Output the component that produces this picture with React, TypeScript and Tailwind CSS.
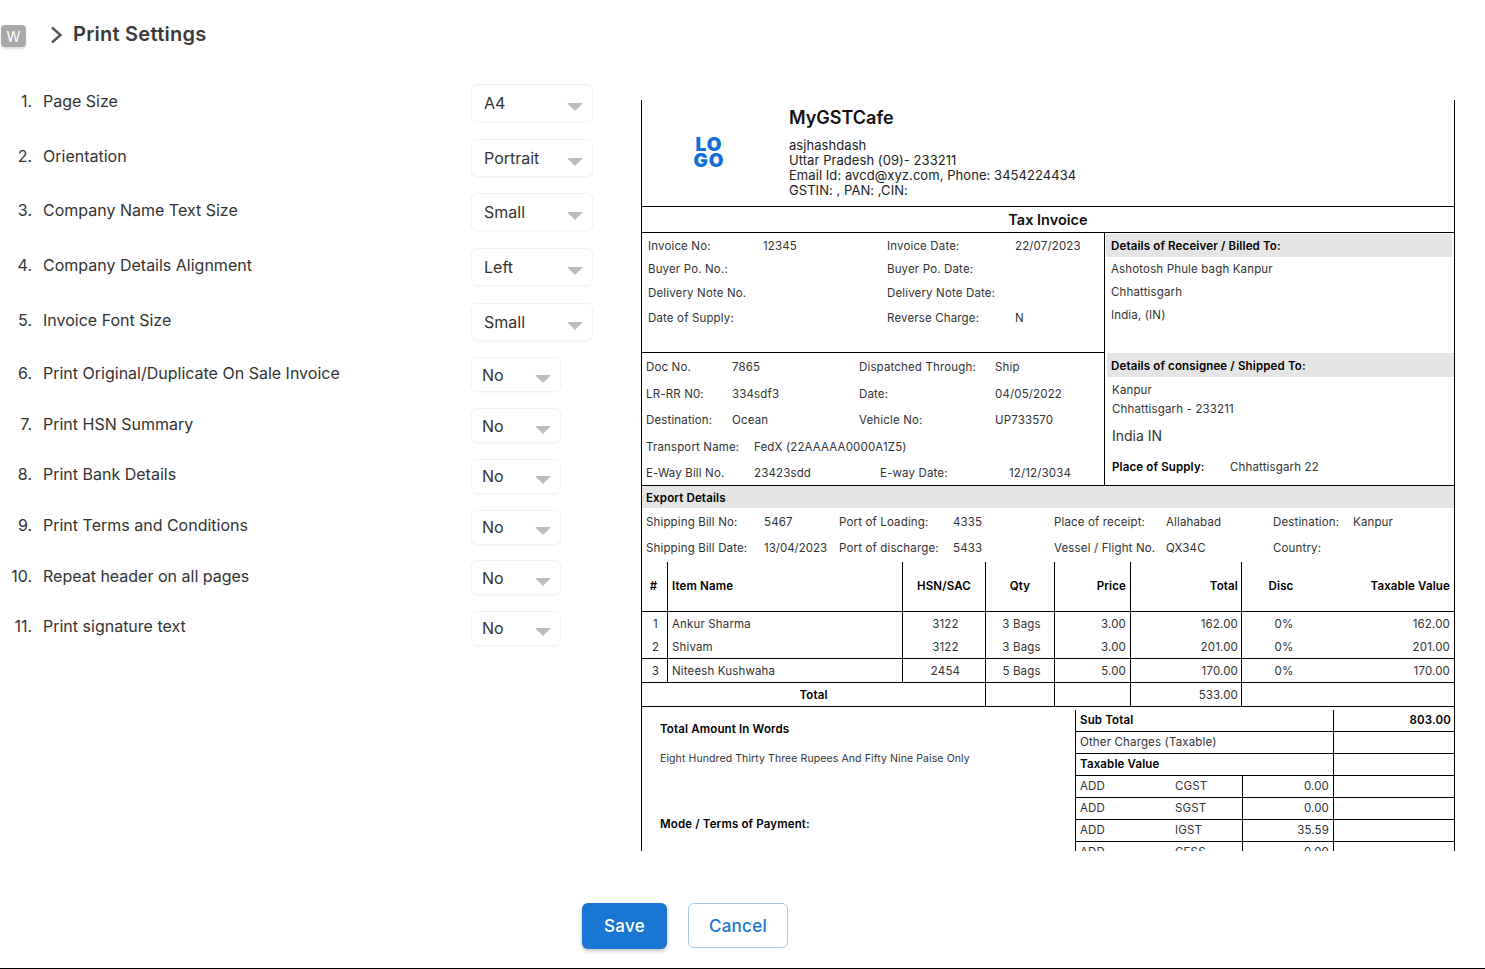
const settings = [
  { n: '1.', label: 'Page Size', value: 'A4', large: true },
  { n: '2.', label: 'Orientation', value: 'Portrait', large: true },
  { n: '3.', label: 'Company Name Text Size', value: 'Small', large: true },
  { n: '4.', label: 'Company Details Alignment', value: 'Left', large: true },
  { n: '5.', label: 'Invoice Font Size', value: 'Small', large: true },
  { n: '6.', label: 'Print Original/Duplicate On Sale Invoice', value: 'No', large: false },
  { n: '7.', label: 'Print HSN Summary', value: 'No', large: false },
  { n: '8.', label: 'Print Bank Details', value: 'No', large: false },
  { n: '9.', label: 'Print Terms and Conditions', value: 'No', large: false },
  { n: '10.', label: 'Repeat header on all pages', value: 'No', large: false },
  { n: '11.', label: 'Print signature text', value: 'No', large: false },
];

const items = [
  { id: '1', name: 'Ankur Sharma', hsn: '3122', qty: '3 Bags', price: '3.00', total: '162.00', h: 'h-[24px]', pad: 'pt-[1px]' },
  { id: '2', name: 'Shivam', hsn: '3122', qty: '3 Bags', price: '3.00', total: '201.00', h: 'h-[23px] border-b border-black', pad: 'pt-[2px]' },
  { id: '3', name: 'Niteesh Kushwaha', hsn: '2454', qty: '5 Bags', price: '5.00', total: '170.00', h: 'h-[24px] border-b border-black', pad: 'pt-[3px]' },
];

const itemCols = 'grid grid-cols-[26px_235px_83px_69px_76px_111px_78px_134px]';

function Caret() {
  return (
    <svg width="16" height="8" viewBox="0 0 16 8" className="blur-[0.4px]">
      <polygon points="0,0 16,0 8,8" fill="#bcbcbc" />
    </svg>
  );
}

function SettingRow({ n, label, value, large }: { n: string; label: string; value: string; large: boolean }) {
  return (
    <div className={`flex items-center ${large ? 'h-[38px] mb-[16.7px]' : 'h-[35px] mb-[15.7px]'}`}>
      <div className="w-[32px] text-right pb-1 text-[16px] text-[#333]">{n}</div>
      <div className="w-[428px] ml-[11px] pb-1 text-[16px] text-[#333]">{label}</div>
      <div
        className={`flex items-center justify-between border border-[#f2f2f2] rounded-md shadow-[0_1px_2px_rgba(0,0,0,0.03)] text-[16px] text-[#333] ${
          large ? 'w-[122px] h-[38px] pl-3 pr-[9px]' : 'w-[90px] h-[35px] pl-[10px] pr-[9px]'
        }`}
      >
        <span>{value}</span>
        <span className="flex pt-2">
          <Caret />
        </span>
      </div>
    </div>
  );
}

function Grey({ children, className }: { children: React.ReactNode; className?: string }) {
  return (
    <div className={`bg-[#e5e5e5] flex items-center font-semibold text-black ${className ?? ''}`}>{children}</div>
  );
}

function Invoice() {
  return (
    <div className="w-[814px] h-[751px] overflow-hidden border-x border-black text-[11.5px] text-[#333] tracking-[0.15px] leading-none">
      <div className="flex h-[107px] border-b border-black">
        <div className="w-[147px] flex items-center justify-center">
          <div className="text-[#0f6fd6] font-black text-[19px] leading-[16px] text-center tracking-[1px] pr-[13px]">
            LO
            <br />
            GO
          </div>
        </div>
        <div className="pt-[6px]">
          <div className="h-[24px] flex items-center text-[18px] font-semibold text-[#111] tracking-normal">MyGSTCafe</div>
          <div className="mt-[8px] text-[13px] leading-[15px] tracking-[0.06px] text-[#222]">
            <div>asjhashdash</div>
            <div>Uttar Pradesh (09)- 233211</div>
            <div>Email Id: avcd@xyz.com, Phone: 3454224434</div>
            <div>GSTIN: , PAN: ,CIN:</div>
          </div>
        </div>
      </div>
      <div className="h-[26px] pt-[1px] border-b border-black flex items-center justify-center text-[14.5px] font-semibold text-[#111] tracking-normal">
        Tax Invoice
      </div>

      <div className="flex h-[253px] border-b border-black">
        <div className="w-[463px] border-r border-black">
          <div className="h-[120px] border-b border-black pl-[6px] pt-[1px]">
            <div className="grid grid-cols-[115px_124px_128px_1fr] grid-rows-[25px_21px_27px_24px] items-center">
              <span>Invoice No:</span>
              <span>12345</span>
              <span>Invoice Date:</span>
              <span>22/07/2023</span>
              <span>Buyer Po. No.:</span>
              <span />
              <span>Buyer Po. Date:</span>
              <span />
              <span>Delivery Note No.</span>
              <span />
              <span>Delivery Note Date:</span>
              <span />
              <span>Date of Supply:</span>
              <span />
              <span>Reverse Charge:</span>
              <span>N</span>
            </div>
          </div>
          <div className="pl-[4px] pt-[2px]">
            <div className="flex items-center h-[26px]">
              <span className="w-[86px]">Doc No.</span>
              <span className="w-[127px]">7865</span>
              <span className="w-[136px]">Dispatched Through:</span>
              <span>Ship</span>
            </div>
            <div className="flex items-center h-[27px]">
              <span className="w-[86px]">LR-RR N0:</span>
              <span className="w-[127px]">334sdf3</span>
              <span className="w-[136px]">Date:</span>
              <span>04/05/2022</span>
            </div>
            <div className="flex items-center h-[26px]">
              <span className="w-[86px]">Destination:</span>
              <span className="w-[127px]">Ocean</span>
              <span className="w-[136px]">Vehicle No:</span>
              <span>UP733570</span>
            </div>
            <div className="flex items-center h-[27px]">
              <span className="w-[108px]">Transport Name:</span>
              <span>FedX (22AAAAA0000A1Z5)</span>
            </div>
            <div className="flex items-center h-[26px]">
              <span className="w-[108px]">E-Way Bill No.</span>
              <span className="w-[126px]">23423sdd</span>
              <span className="w-[129px]">E-way Date:</span>
              <span>12/12/3034</span>
            </div>
          </div>
        </div>
        <div className="flex-1 min-w-0">
          <div className="h-[120px] pt-[1px] pl-[1px] pr-[2px]">
            <Grey className="h-[23px] pl-[5px] pt-[2px]">Details of Receiver / Billed To:</Grey>
            <div className="pl-[5px] pt-[1px]">
              <div className="h-[23px] flex items-center">Ashotosh Phule bagh Kanpur</div>
              <div className="h-[23px] flex items-center">Chhattisgarh</div>
              <div className="h-[23px] flex items-center">India, (IN)</div>
            </div>
          </div>
          <Grey className="h-[24px] pl-[4px] pt-[3px] ml-[2px]">Details of consignee / Shipped To:</Grey>
          <div className="pl-[7px]">
            <div className="h-[26px] pt-[1px] flex items-center">Kanpur</div>
            <div className="h-[13px] flex items-center">Chhattisgarh - 233211</div>
            <div className="h-[39px] flex items-center text-[14px] tracking-normal">India IN</div>
            <div className="h-[26px] flex items-center">
              <span className="w-[118px] font-semibold text-black">Place of Supply:</span>
              <span>Chhattisgarh 22</span>
            </div>
          </div>
        </div>
      </div>

      <Grey className="h-[22px] pl-[4px] pt-[3px]">Export Details</Grey>
      <div className="pl-[4px] pt-[1px] h-[54px] grid grid-cols-[118px_75px_114px_101px_112px_107px_80px_1fr] grid-rows-[27px_26px] items-center">
        <span>Shipping Bill No:</span>
        <span>5467</span>
        <span>Port of Loading:</span>
        <span>4335</span>
        <span>Place of receipt:</span>
        <span>Allahabad</span>
        <span>Destination:</span>
        <span>Kanpur</span>
        <span>Shipping Bill Date:</span>
        <span className="tracking-normal">13/04/2023</span>
        <span>Port of discharge:</span>
        <span>5433</span>
        <span>Vessel / Flight No.</span>
        <span>QX34C</span>
        <span>Country:</span>
        <span />
      </div>

      <div className={`${itemCols} h-[50px] border-b border-black font-semibold text-black items-stretch`}>
        <div className="border-r border-black flex items-center justify-center pr-[2px] pt-[1px]">#</div>
        <div className="border-r border-black flex items-center pl-[4px] pt-[1px]">Item Name</div>
        <div className="border-r border-black flex items-center justify-center pt-[1px]">HSN/SAC</div>
        <div className="border-r border-black flex items-center justify-center pt-[1px]">Qty</div>
        <div className="border-r border-black flex items-center justify-end pr-[4px] pt-[1px]">Price</div>
        <div className="border-r border-black flex items-center justify-end pr-[3px] pt-[1px]">Total</div>
        <div className="flex items-center justify-center pt-[1px]">Disc</div>
        <div className="flex items-center justify-end pr-[4px] pt-[1px]">Taxable Value</div>
      </div>
      {items.map((item) => (
        <div key={item.id} className={`${itemCols} ${item.h} items-stretch`}>
          <div className={`border-r border-black flex items-center justify-center pl-[2px] ${item.pad}`}>{item.id}</div>
          <div className={`border-r border-black flex items-center pl-[4px] ${item.pad}`}>{item.name}</div>
          <div className={`border-r border-black flex items-center justify-center pl-[3px] ${item.pad}`}>{item.hsn}</div>
          <div className={`border-r border-black flex items-center justify-center pl-[3px] ${item.pad}`}>{item.qty}</div>
          <div className={`border-r border-black flex items-center justify-end pr-[4px] ${item.pad}`}>{item.price}</div>
          <div className={`border-r border-black flex items-center justify-end pr-[3px] ${item.pad}`}>{item.total}</div>
          <div className={`flex items-center justify-center pl-[6px] ${item.pad}`}>0%</div>
          <div className={`flex items-center justify-end pr-[4px] ${item.pad}`}>{item.total}</div>
        </div>
      ))}
      <div className={`${itemCols} h-[24px] border-b border-black items-stretch`}>
        <div className="col-span-3 border-r border-black flex items-center justify-center pt-[3px] font-semibold text-black">Total</div>
        <div className="border-r border-black" />
        <div className="border-r border-black" />
        <div className="border-r border-black flex items-center justify-end pr-[3px] pt-[3px]">533.00</div>
      </div>

      <div className="flex">
        <div className="w-[433px] pl-[18px] pt-[17px]">
          <div className="font-semibold text-black">Total Amount In Words</div>
          <div className="mt-[18px] text-[10.5px] tracking-[0.1px]">Eight Hundred Thirty Three Rupees And Fifty Nine Paise Only</div>
          <div className="mt-[55px] font-semibold text-black">Mode / Terms of Payment:</div>
        </div>
        <div className="flex-1 mt-[3px] border-l border-black">
          <div className="flex h-[22px] border-b border-black">
            <div className="w-[258px] border-r border-black flex items-center pl-[4px] font-semibold text-black">Sub Total</div>
            <div className="flex-1 flex items-center justify-end pr-[3px] font-semibold text-black">803.00</div>
          </div>
          <div className="flex h-[22px] border-b border-black">
            <div className="w-[258px] border-r border-black flex items-center pl-[4px]">Other Charges (Taxable)</div>
          </div>
          <div className="flex h-[22px] border-b border-black">
            <div className="w-[258px] border-r border-black flex items-center pl-[4px] font-semibold text-black">Taxable Value</div>
          </div>
          {[
            ['CGST', '0.00'],
            ['SGST', '0.00'],
            ['IGST', '35.59'],
            ['CESS', '0.00'],
          ].map(([tax, amount]) => (
            <div key={tax} className="flex h-[22px] border-b border-black">
              <div className="w-[99px] flex items-center pl-[4px]">ADD</div>
              <div className="w-[68px] border-r border-black flex items-center">{tax}</div>
              <div className="w-[91px] border-r border-black flex items-center justify-end pr-[4px]">{amount}</div>
            </div>
          ))}
        </div>
      </div>
    </div>
  );
}

export default function App() {
  return (
    <div className="w-[1485px] h-[969px] overflow-hidden bg-white border-b border-black font-['Inter',sans-serif]">
      <div className="h-[84px] flex items-start pt-[25px] pl-[1px]">
        <div className="w-[25px] h-[22px] rounded-[4px] bg-[#a9a9a9] text-white text-[14px] flex items-center justify-center shadow-[0_2px_2px_rgba(0,0,0,0.12)]">
          W
        </div>
        <svg width="14" height="18" viewBox="0 0 14 18" className="ml-[24px] mt-[1px]">
          <path d="M2 1.5 L10.5 9 L2 16.5" fill="none" stroke="#555" strokeWidth="2.4" />
        </svg>
        <div className="ml-[9px] -mt-[4px] text-[20px] leading-[26px] font-semibold tracking-[0.25px] text-[#3a3a3a]">Print Settings</div>
      </div>
      <div className="flex h-[767px]">
        <div className="w-[641px]">
          {settings.map((s) => (
            <SettingRow key={s.n} {...s} />
          ))}
        </div>
        <div className="pt-[16px]">
          <Invoice />
        </div>
      </div>
      <div className="flex gap-[21px] pl-[582px] pt-[52px] items-start">
        <button className="w-[85px] h-[46px] pt-[2px] rounded-md bg-[#1976d2] text-white text-[17px] font-medium tracking-[0.3px] shadow-[0_2px_4px_rgba(0,0,0,0.25)]">
          Save
        </button>
        <button className="w-[100px] h-[45px] pt-[2px] rounded-md border border-[#a9c8e8] text-[#1976d2] text-[17px] font-medium tracking-[0.3px]">
          Cancel
        </button>
      </div>
    </div>
  );
}
